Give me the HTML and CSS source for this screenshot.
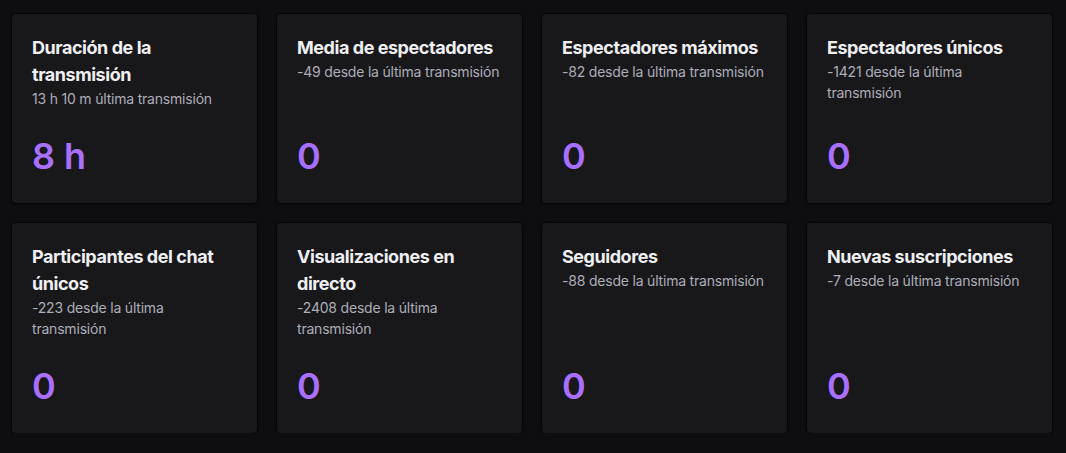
FILE: index.html
```html
<!DOCTYPE html>
<html lang="es">
<head>
<meta charset="utf-8">
<title>Estadísticas</title>
<link rel="stylesheet" href="styles.css">
</head>
<body>
<main class="grid">
  <section class="card">
    <div class="head">
      <h2 class="title">Duración de la transmisión</h2>
      <p class="sub">13 h 10 m última transmisión</p>
    </div>
    <div class="value">8 h</div>
  </section>
  <section class="card">
    <div class="head">
      <h2 class="title">Media de espectadores</h2>
      <p class="sub">-49 desde la última transmisión</p>
    </div>
    <div class="value">0</div>
  </section>
  <section class="card">
    <div class="head">
      <h2 class="title">Espectadores máximos</h2>
      <p class="sub">-82 desde la última transmisión</p>
    </div>
    <div class="value">0</div>
  </section>
  <section class="card">
    <div class="head">
      <h2 class="title">Espectadores únicos</h2>
      <p class="sub">-1421 desde la última transmisión</p>
    </div>
    <div class="value">0</div>
  </section>
  <section class="card">
    <div class="head">
      <h2 class="title">Participantes del chat únicos</h2>
      <p class="sub">-223 desde la última transmisión</p>
    </div>
    <div class="value">0</div>
  </section>
  <section class="card">
    <div class="head">
      <h2 class="title">Visualizaciones en directo</h2>
      <p class="sub">-2408 desde la última transmisión</p>
    </div>
    <div class="value">0</div>
  </section>
  <section class="card">
    <div class="head">
      <h2 class="title">Seguidores</h2>
      <p class="sub">-88 desde la última transmisión</p>
    </div>
    <div class="value">0</div>
  </section>
  <section class="card">
    <div class="head">
      <h2 class="title">Nuevas suscripciones</h2>
      <p class="sub">-7 desde la última transmisión</p>
    </div>
    <div class="value">0</div>
  </section>
</main>
</body>
</html>
```

FILE: styles.css
```css
html, body {
  margin: 0;
  padding: 0;
  background: #0e0e10;
}
body {
  font-family: Inter, "Noto Sans", "Liberation Sans", sans-serif;
  color: #efeff1;
  padding: 14px 14px 0 12px;
}
.grid {
  display: grid;
  grid-template-columns: repeat(4, 245px);
  column-gap: 20px;
  row-gap: 20px;
}
.card {
  background: #18181b;
  border-radius: 4px;
  box-shadow: 0 0 0 1px rgba(0,0,0,0.5), 0 1px 3px rgba(0,0,0,0.6);
  padding: 20px 20px 25px 20px;
  display: flex;
  flex-direction: column;
}
.head {
  flex: 1;
}
.title {
  margin: 0;
  font-size: 18px;
  line-height: 27px;
  font-weight: 700;
  letter-spacing: -0.45px;
  color: #efeff1;
}
.sub {
  margin: 0;
  font-size: 14px;
  line-height: 21px;
  letter-spacing: -0.2px;
  color: #adadb8;
}
.value {
  margin-top: 26px;
  font-size: 36px;
  line-height: 43px;
  font-weight: 600;
  color: #a970ff;
}
```
